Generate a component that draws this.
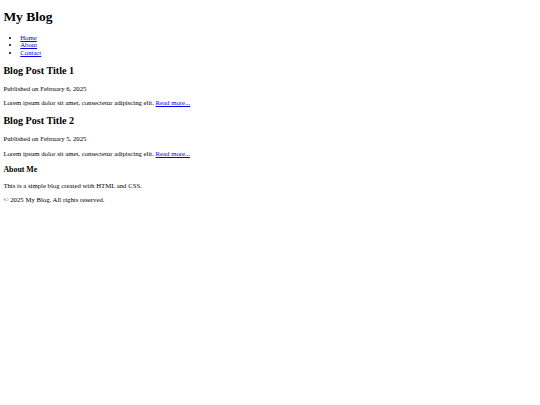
import React from 'react';

interface Post {
  title: string;
  date: string;
}

const posts: Post[] = [
  { title: 'Blog Post Title 1', date: 'February 6, 2025' },
  { title: 'Blog Post Title 2', date: 'February 5, 2025' },
];

const navItems = ['Home', 'About', 'Contact'];

const App: React.FC = () => {
  return (
    <div className="m-[3.375px] text-[6.75px] leading-[7.6px] text-black font-['Liberation_Serif','Times_New_Roman',serif]">
      <header>
        <h1 className="my-[9.045px] text-[13.5px] font-bold leading-[15.6px]">My Blog</h1>
        <nav>
          <ul className="my-[6.75px] list-disc pl-[16.875px]">
            {navItems.map((item) => (
              <li key={item} className="leading-[7.76px]">
                <a href="#" className="text-[#0000ee] underline">
                  {item}
                </a>
              </li>
            ))}
          </ul>
        </nav>
      </header>

      <main>
        {posts.map((post) => (
          <article key={post.title}>
            <h2 className="my-[8.404px] text-[10.125px] font-bold leading-[11.4px]">{post.title}</h2>
            <p className="my-[6.75px]">Published on {post.date}</p>
            <p className="my-[6.75px]">
              Lorem ipsum dolor sit amet, consectetur adipiscing elit.{' '}
              <a href="#" className="text-[#0000ee] underline">
                Read more...
              </a>
            </p>
          </article>
        ))}
      </main>

      <aside>
        <h3 className="my-[7.898px] text-[7.898px] font-bold leading-[9px]">About Me</h3>
        <p className="my-[6.75px]">This is a simple blog created with HTML and CSS.</p>
      </aside>

      <footer>
        <p className="my-[6.75px]">&copy; 2025 My Blog. All rights reserved.</p>
      </footer>
    </div>
  );
};

export default App;
